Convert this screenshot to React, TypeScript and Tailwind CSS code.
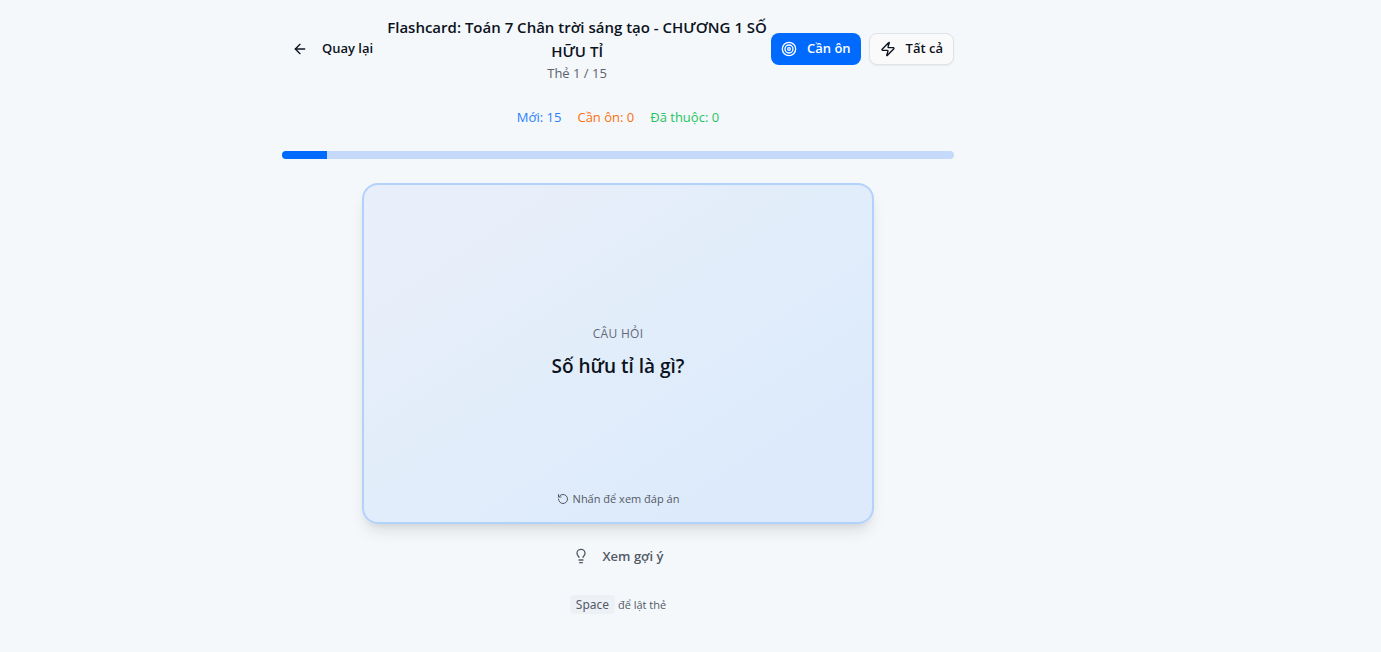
import { useEffect, useState } from 'react';
import { ArrowLeft, Lightbulb, RotateCcw, Target, Zap } from 'lucide-react';

const total = 15;

const stats = [
  { label: 'Mới', value: 15, color: 'text-[#2b7fff]' },
  { label: 'Cần ôn', value: 0, color: 'text-[#f9700e]' },
  { label: 'Đã thuộc', value: 0, color: 'text-[#1fc45c]' },
];

const Header = ({ index }: { index: number }) => {
  const [mode, setMode] = useState('review');

  const modeClass = (name: string) =>
    mode === name
      ? 'bg-[#006aff] text-white'
      : 'border border-[#dfe2e6] bg-[#fafafa] shadow-xs';

  return (
    <header className="flex items-center justify-between">
      <button className="flex h-8 shrink-0 items-center gap-3.5 rounded-lg px-2.5 text-[13px] font-semibold">
        <ArrowLeft className="size-4" />
        Quay lại
      </button>
      <div className="min-w-0 flex-1 text-center">
        <h1 className="text-[15px] leading-6 font-semibold">
          Flashcard: Toán 7 Chân trời sáng tạo - CHƯƠNG 1 SỐ HỮU TỈ
        </h1>
        <p className="text-[13px] leading-5 text-[#5b626c]">
          Thẻ {index} / {total}
        </p>
      </div>
      <div className="flex shrink-0 gap-2">
        <button
          className={`flex h-8 items-center gap-2.5 rounded-lg px-2.5 text-[13px] font-semibold ${modeClass('review')}`}
          onClick={() => setMode('review')}
        >
          <Target className="size-4" />
          Cần ôn
        </button>
        <button
          className={`flex h-8 items-center gap-2.5 rounded-lg px-2.5 text-[13px] font-semibold ${modeClass('all')}`}
          onClick={() => setMode('all')}
        >
          <Zap className="size-4" />
          Tất cả
        </button>
      </div>
    </header>
  );
};

const Card = ({ flipped, onFlip }: { flipped: boolean; onFlip: () => void }) => (
  <button
    className="relative mx-auto mt-6 flex aspect-3/2 w-full max-w-lg flex-col items-center justify-center rounded-2xl border-2 border-[#b3d2fb] bg-linear-to-br from-[#e8eefa] from-15% via-[#e1edfa] via-50% to-[#ddeafb] to-85% shadow-lg"
    onClick={onFlip}
  >
    <span className="text-[12px] leading-4 tracking-wide text-[#646b76] uppercase">
      {flipped ? 'Đáp án' : 'Câu hỏi'}
    </span>
    <span className="mt-2 text-[19px] leading-8 font-semibold">
      {flipped ? 'Số viết được dưới dạng phân số a/b' : 'Số hữu tỉ là gì?'}
    </span>
    <span className="absolute inset-x-0 bottom-3.5 flex items-center justify-center gap-1 text-[11px] leading-[18px] text-[#525a66]">
      <RotateCcw className="size-3" />
      Nhấn để xem đáp án
    </span>
  </button>
);

export default function App() {
  const [index] = useState(1);
  const [flipped, setFlipped] = useState(false);

  useEffect(() => {
    const onKeyDown = (event: KeyboardEvent) => {
      if (event.code === 'Space') {
        event.preventDefault();
        setFlipped((value) => !value);
      }
    };

    window.addEventListener('keydown', onKeyDown);
    return () => window.removeEventListener('keydown', onKeyDown);
  }, []);

  return (
    <div className="min-h-screen bg-[#f4f8fb] pt-[15px] pr-[145px] pb-8 font-['Open_Sans','Noto_Sans',sans-serif] text-[#0c1220]">
      <main className="mx-auto w-full max-w-2xl">
        <Header index={index} />

        <div className="mt-6 flex justify-center gap-4 text-[13px] leading-5">
          {stats.map(({ label, value, color }) => (
            <span key={label} className={color}>
              {label}: {value}
            </span>
          ))}
        </div>

        <div
          className="mt-6 h-2 overflow-hidden rounded-full bg-[#c5dafa]"
          role="progressbar"
          aria-label="Tiến độ"
          aria-valuemin={0}
          aria-valuemax={total}
          aria-valuenow={index}
        >
          <div className="h-full bg-[#006aff]" style={{ width: `${(index / total) * 100}%` }} />
        </div>

        <Card flipped={flipped} onFlip={() => setFlipped(!flipped)} />

        <button className="mx-auto mt-4 flex h-8 items-center gap-3.5 rounded-lg px-2.5 text-[13px] font-semibold text-[#525a66]">
          <Lightbulb className="size-4" />
          Xem gợi ý
        </button>

        <p className="mt-6 text-center text-[11px] leading-[18px] text-[#525a66]">
          <kbd className="rounded-sm bg-[#edf1f6] px-1.5 py-px font-['Noto_Sans',sans-serif] text-[12px]">Space</kbd> để lật thẻ
        </p>
      </main>
    </div>
  );
}
